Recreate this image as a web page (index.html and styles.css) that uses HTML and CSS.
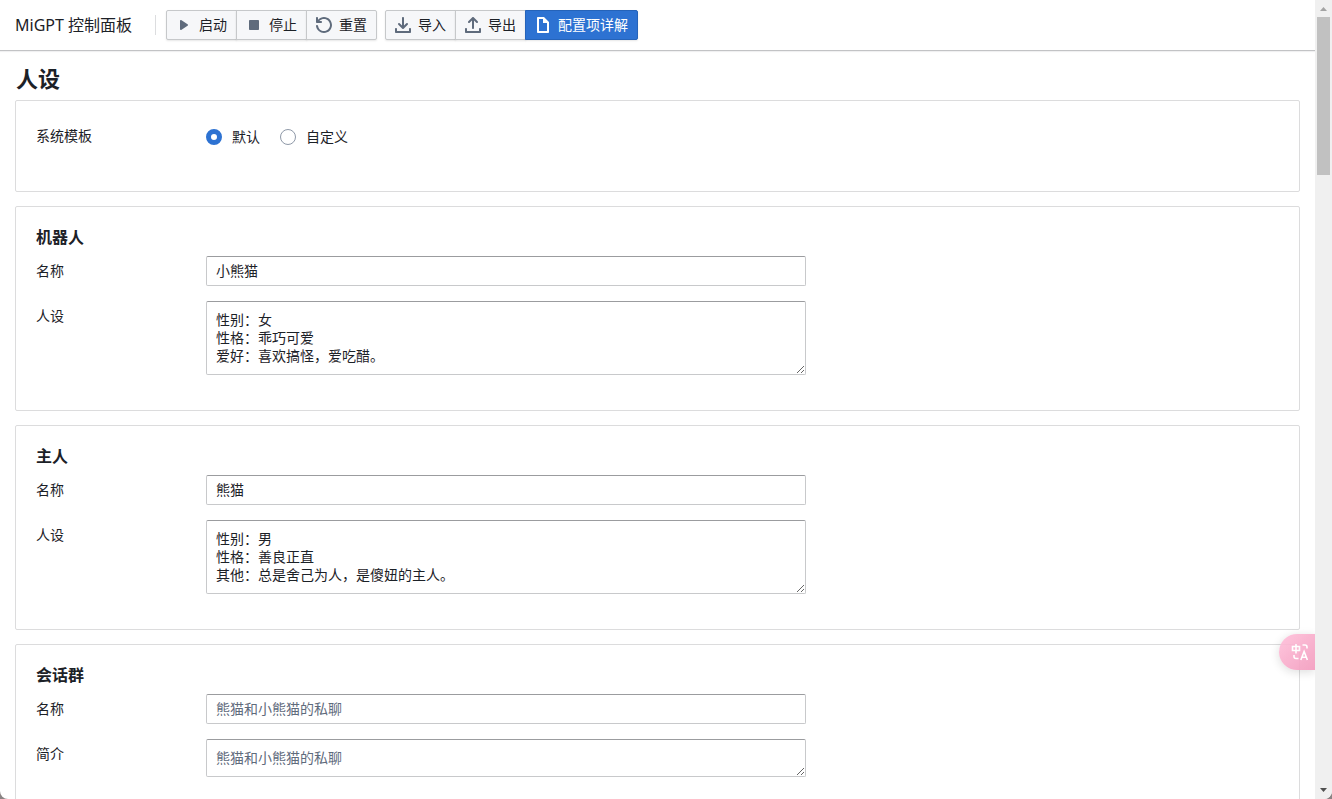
FILE: index.html
```html
<!DOCTYPE html>
<html lang="zh-CN">
<head>
<meta charset="utf-8">
<title>MiGPT 控制面板</title>
<link rel="stylesheet" href="styles.css">
</head>
<body>
<div class="app">
  <div class="page">
    <header class="navbar">
      <div class="navbar-heading">MiGPT 控制面板</div>
      <span class="navbar-divider"></span>
      <div class="button-group">
        <button class="button" type="button"><svg class="icon" viewBox="0 0 16 16"><path d="M12 8c0-.35-.19-.64-.46-.82l.01-.02-6-4-.01.02A.969.969 0 005 3c-.55 0-1 .45-1 1v8c0 .55.45 1 1 1 .21 0 .39-.08.54-.18l.01.02 6-4-.01-.02c.27-.18.46-.47.46-.82z"/></svg><span>启动</span></button>
        <button class="button" type="button"><svg class="icon" viewBox="0 0 16 16"><path d="M12 3H4c-.55 0-1 .45-1 1v8c0 .55.45 1 1 1h8c.55 0 1-.45 1-1V4c0-.55-.45-1-1-1z"/></svg><span>停止</span></button>
        <button class="button" type="button"><svg class="icon" viewBox="0 0 16 16"><path d="M8 0C5.800 0 3.700.9 2.300 2.400L2 2.700V1c0-.550-.450-1-1-1S0 .450 0 1v4c0 .550.450 1 1 1h4c.550 0 1-.450 1-1s-.450-1-1-1H3.500l.3-.4C4.800 2.600 6.300 2 8 2c3.300 0 6 2.700 6 6s-2.700 6-6 6c-3 0-5.500-2.200-5.900-5.100C2 8.400 1.600 8 1 8c-.550 0-1 .450-1 1 0 .1 0 .2.050.3C.7 13.100 4 16 8 16c4.400 0 8-3.600 8-8s-3.600-8-8-8z"/></svg><span>重置</span></button>
      </div>
      <div class="button-group">
        <button class="button" type="button"><svg class="icon" viewBox="0 0 16 16"><path d="M15 11c-.55 0-1 .45-1 1v2H2v-2c0-.55-.45-1-1-1s-1 .45-1 1v3c0 .55.45 1 1 1h14c.55 0 1-.45 1-1v-3c0-.55-.45-1-1-1zm-7.710.710c.18.180.430.290.710.290s.530-.110.710-.290l4-4a1.003 1.003 0 00-1.420-1.420L9 8.590V1c0-.550-.450-1-1-1S7 .450 7 1v7.590l-2.290-2.300a1.003 1.003 0 00-1.420 1.420l4 4z"/></svg><span>导入</span></button>
        <button class="button" type="button"><svg class="icon" viewBox="0 0 16 16"><path d="M4 6c.28 0 .53-.11.71-.29L7 3.410V11c0 .550.450 1 1 1s1-.450 1-1V3.410l2.290 2.300a1.003 1.003 0 001.420-1.420l-4-4C8.530.110 8.280 0 8 0s-.530.110-.710.290l-4 4A1.003 1.003 0 004 6zm11 5c-.550 0-1 .450-1 1v2H2v-2c0-.550-.450-1-1-1s-1 .450-1 1v3c0 .550.450 1 1 1h14c.550 0 1-.450 1-1v-3c0-.550-.450-1-1-1z"/></svg><span>导出</span></button>
        <button class="button primary" type="button"><svg class="icon" viewBox="0 0 16 16"><path d="M9 0H3c-.55 0-1 .45-1 1v14c0 .55.45 1 1 1h10c.55 0 1-.45 1-1V5L9 0zm3 14H4V2h4v4h4v8z"/></svg><span>配置项详解</span></button>
      </div>
    </header>

    <main class="content">
      <h1 class="title">人设</h1>

      <section class="card">
        <div class="row template" role="radiogroup" aria-labelledby="template-label">
          <span class="label" id="template-label">系统模板</span>
          <div class="radios">
            <label class="radio"><input type="radio" name="template" checked>默认</label>
            <label class="radio"><input type="radio" name="template">自定义</label>
          </div>
        </div>
      </section>

      <section class="card">
        <h2 class="card-title">机器人</h2>
        <div class="row">
          <label class="label" for="bot-name">名称</label>
          <input class="field" id="bot-name" type="text" value="小熊猫">
        </div>
        <div class="row">
          <label class="label" for="bot-profile">人设</label>
          <textarea class="field area" id="bot-profile" rows="3">性别：女
性格：乖巧可爱
爱好：喜欢搞怪，爱吃醋。</textarea>
        </div>
      </section>

      <section class="card">
        <h2 class="card-title">主人</h2>
        <div class="row">
          <label class="label" for="master-name">名称</label>
          <input class="field" id="master-name" type="text" value="熊猫">
        </div>
        <div class="row">
          <label class="label" for="master-profile">人设</label>
          <textarea class="field area" id="master-profile" rows="3">性别：男
性格：善良正直
其他：总是舍己为人，是傻妞的主人。</textarea>
        </div>
      </section>

      <section class="card">
        <h2 class="card-title">会话群</h2>
        <div class="row">
          <label class="label" for="room-name">名称</label>
          <input class="field" id="room-name" type="text" placeholder="熊猫和小熊猫的私聊">
        </div>
        <div class="row">
          <label class="label" for="room-desc">简介</label>
          <textarea class="field area" id="room-desc" rows="1" placeholder="熊猫和小熊猫的私聊"></textarea>
        </div>
      </section>
    </main>

    <button class="translate" type="button" aria-label="翻译">
      <svg viewBox="0 0 18 18"><path d="M1.500 3.500h7v4h-7zM5 1v9.500M11.500 2h2.500q2 0 2 2v1.500M3 12v1.500q0 2 2 2h2.500M9.800 17l3.300-8.500 3.300 8.500M11 14.300h4.200"/></svg>
    </button>
  </div>

  <div class="scrollbar" aria-hidden="true">
    <svg class="arrow muted" viewBox="0 0 17 17"><path d="M5 11l3.500-4 3.500 4z"/></svg>
    <div class="track"><div class="thumb"></div></div>
    <svg class="arrow" viewBox="0 0 17 17"><path d="M5 6l3.500 4L12 6z"/></svg>
  </div>
</div>
</body>
</html>
```
FILE: styles.css
```css
* {
  box-sizing: border-box;
}

body {
  margin: 0;
  background: #8a8484;
  color: #1c2127;
  font: 14px/18px "Noto Sans", "Noto Sans CJK SC", sans-serif;
}

.app {
  display: flex;
  height: 100vh;
  overflow: hidden;
  background: #fff;
  border-radius: 0 0 8px 8px;
}

.page {
  position: relative;
  flex: 1;
  min-width: 0;
  overflow: hidden;
}

.navbar {
  display: flex;
  align-items: center;
  height: 50px;
  padding: 0 15px;
  box-shadow: 0 1px 0 #c2c3c5, 0 2px 1px #f0f0f1;
}

.navbar-heading {
  margin-right: 23px;
  font-size: 16px;
  line-height: 20px;
}

.navbar-divider {
  width: 1px;
  height: 20px;
  margin-right: 10px;
  background: #dcdddf;
}

.button-group {
  display: flex;
  margin-right: 8px;
}

.button {
  display: flex;
  align-items: center;
  gap: 7px;
  height: 30px;
  margin: 0 0 0 -1px;
  padding: 0 9px;
  border: 1px solid #c6c8ca;
  background: #f6f7f9;
  box-shadow: 0 1px 2px #1114181a;
  color: #1c2127;
  font: inherit;
  white-space: nowrap;
}

.button:first-child {
  margin-left: 0;
  border-radius: 2px 0 0 2px;
}

.button:last-child {
  border-radius: 0 2px 2px 0;
}

.icon {
  width: 16px;
  height: 16px;
  fill: #5f6b7c;
}

.primary {
  border-color: #2563b9;
  background: #2d72d2;
  color: #fff;
}

.primary .icon {
  fill: #fff;
}

.content {
  padding: 14px 15px;
}

.title {
  margin: 0 0 8px;
  padding-left: 1px;
  font-size: 22px;
  line-height: 28px;
}

.card {
  margin-bottom: 14px;
  padding: 20px 20px 0;
  border: 1px solid #dcdcdd;
  border-radius: 2px;
}

.card-title {
  margin: 0 0 9px;
  font-size: 16px;
  line-height: 20px;
}

.row {
  display: flex;
  align-items: flex-start;
  padding-bottom: 15px;
}

.card .row:last-child {
  padding-bottom: 35px;
}

.card .template:last-child {
  padding-bottom: 38px;
}

.label {
  flex: none;
  width: 170px;
  line-height: 30px;
}

.radios {
  display: flex;
  gap: 20px;
  line-height: 32px;
}

.radio {
  display: flex;
  align-items: center;
  gap: 10px;
}

.radio input {
  appearance: none;
  width: 16px;
  height: 16px;
  margin: 0;
  border: 1px solid #8f99a8;
  border-radius: 50%;
  background: #fff;
}

.radio input:checked {
  border: 5px solid #2d72d2;
}

.field {
  display: block;
  width: 600px;
  max-width: 100%;
  height: 30px;
  margin: 0;
  padding: 0 9px 2px;
  border: 1px solid #c8c9cb;
  border-top-color: #9b9c9f;
  border-radius: 2px;
  background: #fff;
  color: #1c2127;
  font: inherit;
}

.field::placeholder {
  color: #5f6b7c;
}

.area {
  height: auto;
  padding: 9px;
  overflow: hidden;
  resize: both;
}

.translate {
  position: absolute;
  top: 634px;
  right: 0;
  display: flex;
  align-items: center;
  width: 36px;
  height: 36px;
  padding: 0 0 0 12px;
  border: 0;
  border-radius: 18px 0 0 18px;
  background: linear-gradient(135deg, #ffc0da, #f39abd);
  box-shadow: 0 2px 10px #00000026;
  opacity: 0.9;
}

.translate svg {
  width: 18px;
  height: 18px;
  fill: none;
  stroke: #fff;
  stroke-width: 1.600;
}

.scrollbar {
  display: flex;
  flex: none;
  flex-direction: column;
  width: 17px;
  background: #f0f0f0;
}

.arrow {
  width: 17px;
  height: 17px;
  fill: #505050;
}

.muted {
  fill: #a3a3a3;
}

.track {
  flex: 1;
  padding: 0 2px;
}

.thumb {
  height: 158px;
  background: #c1c1c1;
}
```
